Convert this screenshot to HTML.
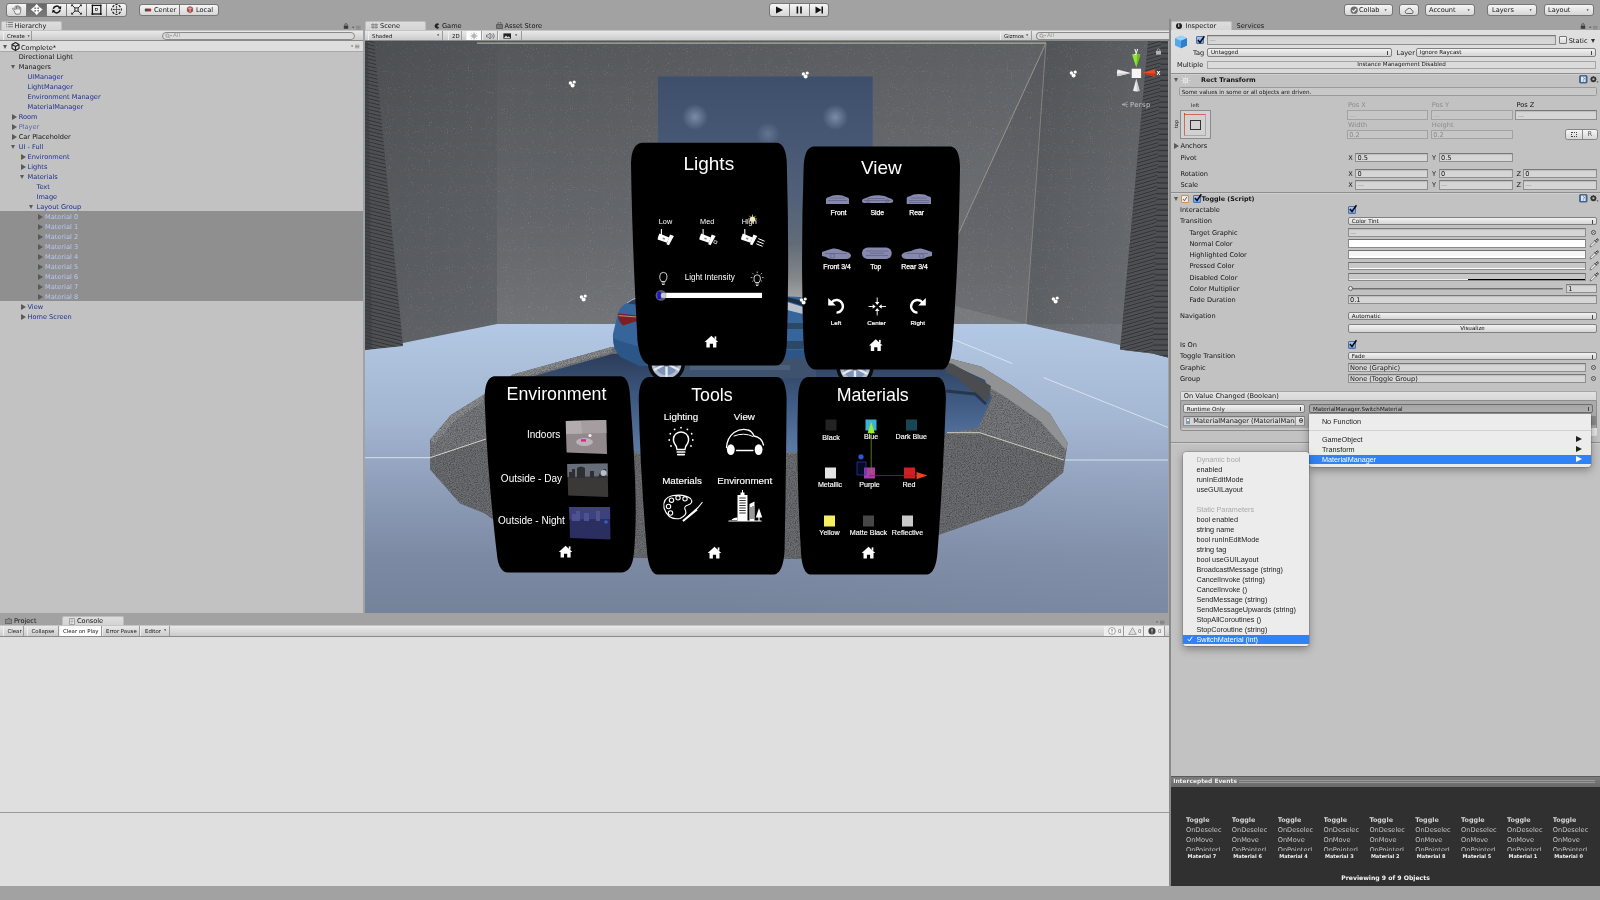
<!DOCTYPE html>
<html lang="en">
<head>
<meta charset="utf-8">
<title>Unity - Complete</title>
<style>
*{box-sizing:border-box;margin:0;padding:0}
html,body{width:1600px;height:900px;overflow:hidden}
body{position:relative;background:#a2a2a2;will-change:transform;font:6.6px/10px "DejaVu Sans","Liberation Sans",sans-serif;color:#141414;-webkit-font-smoothing:antialiased}
.a{position:absolute}
.t{position:absolute;white-space:nowrap;line-height:10px}
.m{font-size:5.6px}
.tb .m{font-size:5.4px}
.b{font-weight:bold;font-size:6.4px}
.panel{position:absolute;background:#c2c2c2}
.tab{position:absolute;height:10.4px;top:20.6px;background:linear-gradient(#dddddd,#d3d3d3);border:1px solid #bdbdbd;border-bottom:none;border-radius:2px 2px 0 0}
.tbar{position:absolute;height:11px;background:linear-gradient(#e9e9e9,#cbcbcb);border-bottom:1px solid #8a8a8a;border-top:1px solid #c4c4c4}
.btn{position:absolute;background:linear-gradient(#f6f6f6,#d6d6d6);border:1px solid #767676;border-radius:3px}
.btn.on{background:linear-gradient(#7e7e7e,#8e8e8e)}
.seg{position:absolute;top:0;bottom:0;border-right:1px solid #7a7a7a}
.fld{position:absolute;height:9px;background:#d6d6d6;border:1px solid #8f8f8f;border-top-color:#787878;box-shadow:inset 0 1px 1px rgba(0,0,0,.12)}
.fld.dis{background:#c6c6c6;border-color:#a2a2a2;box-shadow:none}
.dd{position:absolute;height:9px;background:linear-gradient(#f2f2f2,#d4d4d4);border:1px solid #808080;border-radius:2px}
.dd:after{content:"";position:absolute;right:3px;top:2px;width:1px;height:4px;background:#444}
.ck{position:absolute;width:8px;height:8px;background:linear-gradient(#f6f6f6,#d8d8d8);border:1px solid #777;border-radius:1px}
.tb{position:absolute;top:0;bottom:0;border-right:1px solid #9a9a9a;border-left:1px solid #efefef}
.h{color:#1e2e92}
.s{color:#b9c6f5}
.ar{position:absolute;width:0;height:0;border-left:5.4px solid #5a5a5a;border-top:3px solid transparent;border-bottom:3px solid transparent}
.ad{position:absolute;width:0;height:0;border-top:4.5px solid #5a5a5a;border-left:2.8px solid transparent;border-right:2.8px solid transparent}
.menu{position:absolute;background:#ececec;border-radius:3px;box-shadow:0 3px 8px rgba(0,0,0,.35),0 0 0 .5px rgba(0,0,0,.25);font:6.6px/10px "Liberation Sans",sans-serif;color:#222}
.menu .t{font:7.25px/10px "Liberation Sans",sans-serif}
.hl{position:absolute;background:#2f83f6}
</style>
</head>
<body>

<!-- ============ TOP TOOLBAR ============ -->
<div id="topbar" class="a" style="left:0;top:0;width:1600px;height:19px;background:#a2a2a2"></div>
<div class="btn" style="left:6px;top:3px;width:121px;height:14px">
  <div class="seg" style="left:0;width:20px"></div>
  <div class="seg" style="left:20px;width:20px;background:linear-gradient(#686868,#787878)"></div>
  <div class="seg" style="left:40px;width:20px"></div>
  <div class="seg" style="left:60px;width:20px"></div>
  <div class="seg" style="left:80px;width:20px"></div>
  <svg class="a" style="left:0;top:0" width="120" height="12" viewBox="0 0 120 12">
    <path transform="translate(.9 .4)" d="M6.2 6.5 L5 5 Q4.3 4.2 5 3.8 Q5.8 3.6 6.6 4.6 L7.2 5.3 V2.6 Q7.2 1.8 7.9 1.8 Q8.6 1.8 8.6 2.6 V1.9 Q8.6 1.2 9.3 1.2 Q10 1.2 10 1.9 V2.3 Q10 1.6 10.7 1.6 Q11.4 1.6 11.4 2.4 V3.2 Q11.4 2.6 12.1 2.6 Q12.8 2.6 12.8 3.4 V6.5 Q12.8 8.5 11.6 9.8 H7.8 Q6.8 8 6.2 6.5 Z M8.6 2.6V5 M10 2.3V5 M11.4 3.2V5.2" fill="#f0f0f0" stroke="#606060" stroke-width=".8" stroke-linejoin="round"/>
    <g fill="#fff"><path d="M29.7 -.2 L32.6 3.4 H26.8 Z M29.7 11.2 L32.6 7.6 H26.8 Z M23.8 5.5 L27.4 2.6 V8.4 Z M35.6 5.5 L32 2.6 V8.4 Z"/><rect x="29.1" y="2" width="1.2" height="7"/><rect x="26" y="4.9" width="7.4" height="1.2"/></g>
    <g fill="none" stroke="#111" stroke-width="1.5"><path d="M46.3 4.9 A3.5 3.5 0 0 1 52.6 3.6"/><path d="M53.1 6 A3.5 3.5 0 0 1 46.8 7.4"/></g>
    <path d="M54.3 2 L53.9 5.6 L50.8 4.1 Z M45.1 9 L45.5 5.4 L48.6 6.9 Z" fill="#111"/>
    <g stroke="#111" stroke-width=".9" fill="none"><rect x="67.9" y="3.9" width="3.2" height="3.2"/><path d="M67.9 3.9 L65 1.2 M71.1 3.9 L74 1.2 M67.9 7.1 L65 9.8 M71.1 7.1 L74 9.8"/></g>
    <path d="M64.2 .5 h2.3 l-2.3 2.3z M74.8 .5 h-2.3 l2.3 2.3z M64.2 10.5 h2.3 l-2.3 -2.3z M74.8 10.5 h-2.3 l2.3 -2.3z" fill="#111"/>
    <g stroke="#111" fill="none"><rect x="85.4" y="1.4" width="8.4" height="8.6" stroke-width="1.25"/><rect x="88.6" y="4.6" width="2" height="2" stroke-width=".6"/></g>
    <g fill="#111"><circle cx="85.4" cy="10" r="1"/><circle cx="93.8" cy="10" r="1"/><circle cx="85.4" cy="1.4" r=".8"/><circle cx="93.8" cy="1.4" r=".8"/></g>
    <g stroke="#111" fill="none" stroke-width="1.2"><path d="M105.6 3.2 A4.9 4.9 0 0 1 107.3 1.2 M111.7 1.2 A4.9 4.9 0 0 1 113.4 3.2 M113.4 7.8 A4.9 4.9 0 0 1 111.7 9.8 M107.3 9.8 A4.9 4.9 0 0 1 105.6 7.8"/><path d="M104.7 4.4 V6.6 M114.3 4.4 V6.6 M108.4 .6 H110.6 M108.4 10.4 H110.6" stroke-width="1"/></g>
    <g stroke="#222" stroke-width=".6"><path d="M109.5 2.6 V8.4 M106.6 5.5 H112.4"/></g>
    <path d="M109.5 1.9 l-1 1.3 h2z M109.5 9.1 l-1 -1.3 h2z M105.9 5.5 l1.3 -1 v2z M113.1 5.5 l-1.3 -1 v2z" fill="#222"/>
  </svg>
</div>
<div class="btn" style="left:139px;top:4px;width:80px;height:12px">
  <div class="seg" style="left:0;width:40px"></div>
  <svg class="a" style="left:0;top:0" width="78" height="10" viewBox="0 0 78 10">
    <path d="M5 3.5 h3 v3 h-3z" fill="#555"/><path d="M8 3.5 h3 v3 h-3z" fill="#c33"/><path d="M4.5 5 h7" stroke="#333" stroke-width=".6"/>
    <path d="M50 1.5 l2.6 1.2 v3.6 l-2.6 1.7 l-2.6 -1.7 v-3.6z" fill="#b44" stroke="#533" stroke-width=".6"/><path d="M50 1.5 v6.5 M47.4 2.7 l2.6 1.4 l2.6 -1.4" stroke="#fff" stroke-width=".5" fill="none"/>
  </svg>
  <span class="t" style="left:14px;top:0">Center</span>
  <span class="t" style="left:56px;top:0">Local</span>
</div>
<div class="btn" style="left:769px;top:3px;width:60px;height:14px">
  <div class="seg" style="left:0;width:20px"></div>
  <div class="seg" style="left:20px;width:20px"></div>
  <svg class="a" style="left:0;top:0" width="58" height="12" viewBox="0 0 58 12">
    <path d="M6 2.5 L13 6 L6 9.5 Z" fill="#111"/>
    <path d="M26.6 2.5 h1.6 v7 h-1.6z M30.2 2.5 h1.6 v7 h-1.6z" fill="#111"/>
    <path d="M45.5 2.5 L51.5 6 L45.5 9.5 Z M51.5 2.5 h1.5 v7 h-1.5z" fill="#111"/>
  </svg>
</div>
<div class="btn" style="left:1344px;top:4px;width:49px;height:12px"><svg class="a" style="left:4.5px;top:.8px" width="8.4" height="8.4" viewBox="0 0 8 8"><circle cx="4" cy="4" r="3.5" fill="#6e6e6e"/><path d="M2.2 4.2 l1.3 1.3 l2.4 -2.8" stroke="#fff" stroke-width="1" fill="none"/></svg><span class="t" style="left:14px;top:0">Collab</span><span class="t" style="left:39.5px;top:.3px;font-size:2.9px;color:#555">▼</span></div>
<div class="btn" style="left:1399px;top:4px;width:20px;height:12px"><svg class="a" style="left:4px;top:1.5px" width="11" height="8" viewBox="0 0 11 8"><path d="M2.5 6.5 a1.8 1.8 0 0 1 .3 -3.5 a2.6 2.6 0 0 1 5 .3 a1.7 1.7 0 0 1 .4 3.2z" fill="none" stroke="#333" stroke-width=".7"/></svg></div>
<div class="btn" style="left:1425px;top:4px;width:50px;height:12px"><span class="t" style="left:3px;top:0">Account</span><span class="t" style="left:41.5px;top:.3px;font-size:2.9px;color:#555">▼</span></div>
<div class="btn" style="left:1487px;top:4px;width:50px;height:12px"><span class="t" style="left:4px;top:0">Layers</span><span class="t" style="left:41.5px;top:.3px;font-size:2.9px;color:#555">▼</span></div>
<div class="btn" style="left:1544px;top:4px;width:50px;height:12px"><span class="t" style="left:3px;top:0">Layout</span><span class="t" style="left:41.5px;top:.3px;font-size:2.9px;color:#555">▼</span></div>

<!-- ============ HIERARCHY ============ -->
<div class="tab" style="left:1px;width:61px"><svg class="a" style="left:3.5px;top:.8px" width="7" height="5.2" viewBox="0 0 8 6"><path d="M0 .5h1M2 .5h6M0 3h1M2 3h6M0 5.5h1M2 5.5h6" stroke="#555" stroke-width=".8"/></svg><span class="t" style="left:12.5px;top:-1px">Hierarchy</span></div>
<svg class="a" style="left:343px;top:23px" width="18" height="7" viewBox="0 0 18 7"><rect x=".8" y="2.6" width="4.4" height="3.2" fill="#3c3c3c"/><path d="M1.8 2.6v-.8a1.2 1.2 0 0 1 2.4 0v.8" fill="none" stroke="#3c3c3c" stroke-width=".7"/><path d="M9 3.8h2.4l-1.2 1.4z" fill="#444"/><path d="M13 3.4h4.6M13 4.7h4.6M13 6h4.6" stroke="#808080" stroke-width=".8"/></svg>
<div class="panel" id="hier" style="left:0;top:30px;width:363px;height:583px">
  <div class="tbar" style="left:0;top:0;width:363px">
    <div class="tb" style="left:3px;width:29px"><span class="t" style="left:3px;top:0;font-size:5.4px">Create</span><span class="t" style="left:23.5px;top:-.5px;font-size:2.9px;color:#555">▼</span></div>
    <div class="a" style="left:162px;top:1px;width:193px;height:8px;border:1px solid #8a8a8a;border-radius:4px;background:#dcdcdc"></div>
    <svg class="a" style="left:165px;top:2px" width="8" height="6" viewBox="0 0 8 6"><circle cx="2.4" cy="2.6" r="1.6" fill="none" stroke="#777" stroke-width=".6"/><path d="M3.5 3.8 l1.3 1.5" stroke="#777" stroke-width=".6"/><path d="M5 2.3 h2 l-1 1.2z" fill="#777"/></svg>
    <span class="t m" style="left:173px;top:-1px;color:#9a9a9a">All</span>
  </div>
  <div class="a" style="left:0;top:11px;width:363px;height:11px;background:#dedede;border-bottom:1px solid #a8a8a8"></div>
  <div class="a" style="left:0;top:181px;width:363px;height:90px;background:#8f8f8f"></div>
  <svg class="a" style="left:350px;top:14px" width="11" height="5" viewBox="0 0 11 5"><path d="M1 1.6h2.2l-1.1 1.3z" fill="#555"/><path d="M5 1.2h4.4M5 2.5h4.4M5 3.8h4.4" stroke="#8a8a8a" stroke-width=".8"/></svg>
  <svg class="a" style="left:11px;top:12px" width="9" height="9" viewBox="0 0 18 18"><path d="M9 1 L16 5 V13 L9 17 L2 13 V5 Z M9 9 V17 M9 9 L2 5 M9 9 L16 5" fill="none" stroke="#222" stroke-width="2.2" stroke-linejoin="round"/></svg>
  <i class="ad" style="left:3.2px;top:15.1px"></i>
<span class="t " style="left:21px;top:12.5px">Complete*</span>
<span class="t " style="left:18.7px;top:22.0px">Directional Light</span>
<i class="ad" style="left:11.4px;top:34.6px"></i>
<span class="t " style="left:18.7px;top:32.0px">Managers</span>
<span class="t h" style="left:27.5px;top:42.0px">UIManager</span>
<span class="t h" style="left:27.5px;top:52.0px">LightManager</span>
<span class="t h" style="left:27.5px;top:62.0px">Environment Manager</span>
<span class="t h" style="left:27.5px;top:72.0px">MaterialManager</span>
<i class="ar" style="left:11.8px;top:84.0px"></i>
<span class="t h" style="left:18.7px;top:82.0px">Room</span>
<i class="ar" style="left:11.8px;top:94.0px"></i>
<span class="t h" style="left:18.7px;top:92.0px;opacity:.62">Player</span>
<i class="ar" style="left:11.8px;top:104.0px"></i>
<span class="t " style="left:18.7px;top:102.0px">Car Placeholder</span>
<i class="ad" style="left:11.4px;top:114.6px"></i>
<span class="t h" style="left:18.7px;top:112.0px">UI - Full</span>
<i class="ar" style="left:20.6px;top:124.0px"></i>
<span class="t h" style="left:27.5px;top:122.0px">Environment</span>
<i class="ar" style="left:20.6px;top:134.0px"></i>
<span class="t h" style="left:27.5px;top:132.0px">Lights</span>
<i class="ad" style="left:20.2px;top:144.6px"></i>
<span class="t h" style="left:27.5px;top:142.0px">Materials</span>
<span class="t h" style="left:36.5px;top:152.0px">Text</span>
<span class="t h" style="left:36.5px;top:162.0px">Image</span>
<i class="ad" style="left:29.2px;top:174.6px"></i>
<span class="t h" style="left:36.5px;top:172.0px">Layout Group</span>
<i class="ar" style="left:38.1px;top:184.0px"></i>
<span class="t s" style="left:45px;top:182.0px">Material 0</span>
<i class="ar" style="left:38.1px;top:194.0px"></i>
<span class="t s" style="left:45px;top:192.0px">Material 1</span>
<i class="ar" style="left:38.1px;top:204.0px"></i>
<span class="t s" style="left:45px;top:202.0px">Material 2</span>
<i class="ar" style="left:38.1px;top:214.0px"></i>
<span class="t s" style="left:45px;top:212.0px">Material 3</span>
<i class="ar" style="left:38.1px;top:224.0px"></i>
<span class="t s" style="left:45px;top:222.0px">Material 4</span>
<i class="ar" style="left:38.1px;top:234.0px"></i>
<span class="t s" style="left:45px;top:232.0px">Material 5</span>
<i class="ar" style="left:38.1px;top:244.0px"></i>
<span class="t s" style="left:45px;top:242.0px">Material 6</span>
<i class="ar" style="left:38.1px;top:254.0px"></i>
<span class="t s" style="left:45px;top:252.0px">Material 7</span>
<i class="ar" style="left:38.1px;top:264.0px"></i>
<span class="t s" style="left:45px;top:262.0px">Material 8</span>
<i class="ar" style="left:20.6px;top:274.0px"></i>
<span class="t h" style="left:27.5px;top:272.0px">View</span>
<i class="ar" style="left:20.6px;top:284.0px"></i>
<span class="t h" style="left:27.5px;top:282.0px">Home Screen</span>
</div>


<!-- ============ SCENE ============ -->
<div class="tab" style="left:365px;width:61px"><svg class="a" style="left:5px;top:1.4px" width="7" height="6" viewBox="0 0 7 6"><path d="M0 1.5h7M0 3h7M0 4.5h7M2 0v6M5 0v6" stroke="#666" stroke-width=".55"/></svg><span class="t" style="left:14px;top:-1px">Scene</span></div>
<svg class="a" style="left:434px;top:23px" width="6" height="6" viewBox="0 0 6 6"><path d="M5.2 1.2 A2.6 2.6 0 1 0 5.2 4.8 L3 3 Z" fill="#222"/></svg>
<span class="t" style="left:442px;top:21px">Game</span>
<svg class="a" style="left:496px;top:22px" width="7" height="7" viewBox="0 0 7 7"><path d="M.5 2.5h6v4h-6z" fill="#777" stroke="#444" stroke-width=".6"/><path d="M2 2.5v-1.2a1.5 1.5 0 0 1 3 0v1.2" fill="none" stroke="#444" stroke-width=".7"/></svg>
<span class="t" style="left:504.5px;top:21px">Asset Store</span>
<div class="tbar" style="left:365px;top:30px;width:804px">
  <div class="tb" style="left:3px;width:75px"><span class="t m" style="left:3px;top:0">Shaded</span><span class="t" style="left:68px;top:-1.5px;font-size:2.9px;color:#555">▼</span></div>
  <div class="tb" style="left:83px;width:14px"><span class="t m" style="left:3px;top:0">2D</span></div>
  <div class="tb" style="left:101px;width:16px;background:#fbfbfb"><svg class="a" style="left:3px;top:1px" width="8" height="8" viewBox="0 0 8 8"><circle cx="4" cy="4" r="1.3" fill="none" stroke="#444" stroke-width=".6"/><path d="M4 .5v1.4M4 6.1v1.4M.5 4h1.4M6.1 4h1.4M1.5 1.5l1 1M5.5 5.5l1 1M6.5 1.5l-1 1M2.5 5.5l-1 1" stroke="#444" stroke-width=".5"/></svg></div>
  <div class="tb" style="left:117px;width:16px"><svg class="a" style="left:3px;top:1px" width="10" height="8" viewBox="0 0 10 8"><path d="M.5 3h1.7l2-2v6l-2-2H.5z" fill="none" stroke="#444" stroke-width=".6"/><path d="M5.5 2.2a2.4 2.4 0 0 1 0 3.6M7 1.2a4 4 0 0 1 0 5.6" fill="none" stroke="#444" stroke-width=".6"/></svg></div>
  <div class="tb" style="left:133px;width:24px"><svg class="a" style="left:4px;top:2px" width="9" height="6" viewBox="0 0 9 6"><rect x=".4" y=".4" width="7.6" height="5.2" fill="#222"/><path d="M1 5l2-2.4 1.6 1.6 1-.9L7.4 5z" fill="#ddd"/></svg><span class="t" style="left:16px;top:-1.5px;font-size:2.9px;color:#555">▼</span></div>
  <div class="tb" style="left:635px;width:32px"><span class="t m" style="left:3px;top:0">Gizmos</span><span class="t" style="left:25px;top:-1.5px;font-size:2.9px;color:#555">▼</span></div>
  <div class="a" style="left:671px;top:1px;width:133px;height:8px;border:1px solid #8a8a8a;border-radius:4px 0 0 4px;border-right:none;background:#dcdcdc"></div>
  <svg class="a" style="left:674px;top:2px" width="8" height="6" viewBox="0 0 8 6"><circle cx="2.4" cy="2.6" r="1.6" fill="none" stroke="#777" stroke-width=".6"/><path d="M3.5 3.8 l1.3 1.5" stroke="#777" stroke-width=".6"/><path d="M5 2.3 h2 l-1 1.2z" fill="#777"/></svg>
  <span class="t m" style="left:682px;top:-1px;color:#9a9a9a">All</span>
</div>
<svg class="a" style="left:365px;top:41px" width="803" height="572" viewBox="365 41 803 572" font-family="Liberation Sans,sans-serif">
<defs>
  <linearGradient id="gfloor" x1="0" y1="324" x2="0" y2="613" gradientUnits="userSpaceOnUse"><stop offset="0" stop-color="#b3c8e4"/><stop offset=".33" stop-color="#a2b5d1"/><stop offset=".61" stop-color="#8b9ab5"/><stop offset=".8" stop-color="#7d8aa4"/><stop offset="1" stop-color="#74829a"/></linearGradient>
  <linearGradient id="gfloorx" x1="700" y1="0" x2="1168" y2="0" gradientUnits="userSpaceOnUse"><stop offset="0" stop-color="#b8cbe6" stop-opacity="0"/><stop offset="1" stop-color="#b8cbe6" stop-opacity=".1"/></linearGradient>
  <linearGradient id="gwalll" x1="365" y1="0" x2="497" y2="0" gradientUnits="userSpaceOnUse"><stop offset="0" stop-color="#56595d"/><stop offset="1" stop-color="#5d6064"/></linearGradient>
  <linearGradient id="gwall" x1="497" y1="0" x2="1026" y2="0" gradientUnits="userSpaceOnUse"><stop offset="0" stop-color="#606367"/><stop offset=".12" stop-color="#606367"/><stop offset=".6" stop-color="#66696d"/><stop offset="1" stop-color="#6a6d71"/></linearGradient>
  <linearGradient id="gwallv" x1="0" y1="41" x2="0" y2="361" gradientUnits="userSpaceOnUse"><stop offset="0" stop-color="#000" stop-opacity=".12"/><stop offset=".5" stop-color="#000" stop-opacity=".02"/><stop offset="1" stop-color="#fff" stop-opacity=".04"/></linearGradient>
  <linearGradient id="gblue" x1="0" y1="76" x2="0" y2="300" gradientUnits="userSpaceOnUse"><stop offset="0" stop-color="#3e4f6c"/><stop offset=".3" stop-color="#475874"/><stop offset=".55" stop-color="#52617a"/><stop offset=".75" stop-color="#626c78"/><stop offset=".9" stop-color="#83878a"/><stop offset="1" stop-color="#a6a7a6"/></linearGradient>
  <radialGradient id="gglow"><stop offset="0" stop-color="#9db0cc" stop-opacity=".6"/><stop offset="1" stop-color="#9db0cc" stop-opacity="0"/></radialGradient>
  <linearGradient id="gwallb" x1="0" y1="41" x2="0" y2="324" gradientUnits="userSpaceOnUse"><stop offset="0" stop-color="#fff" stop-opacity="0"/><stop offset=".6" stop-color="#fff" stop-opacity=".02"/><stop offset="1" stop-color="#fff" stop-opacity=".09"/></linearGradient>
  <linearGradient id="gwallr" x1="1030" y1="0" x2="1150" y2="0" gradientUnits="userSpaceOnUse"><stop offset="0" stop-color="#5a5d61"/><stop offset="1" stop-color="#686b6f"/></linearGradient>
  <pattern id="pstripe" width="8" height="3.6" patternUnits="userSpaceOnUse" patternTransform="skewY(14)"><rect width="8" height="3.6" fill="#4e5054"/><rect y="2.7" width="8" height=".9" fill="#303235"/></pattern>
  <pattern id="pstripe3" width="8" height="5.4" patternUnits="userSpaceOnUse"><rect width="8" height="5.4" fill="#4d4f53"/><rect y="4.2" width="8" height="1.2" fill="#2f3134"/></pattern>
  <pattern id="pstripe2" width="8" height="3.6" patternUnits="userSpaceOnUse" patternTransform="skewY(-16)"><rect width="8" height="3.6" fill="#4e5054"/><rect y="2.7" width="8" height=".9" fill="#303235"/></pattern>
  <linearGradient id="gdisc" x1="0" y1="350" x2="0" y2="452" gradientUnits="userSpaceOnUse"><stop offset="0" stop-color="#2a3a56"/><stop offset=".5" stop-color="#3f5a82"/><stop offset="1" stop-color="#5b7ba7"/></linearGradient>
  <filter id="noise" x="0" y="0" width="100%" height="100%" color-interpolation-filters="sRGB"><feTurbulence type="fractalNoise" baseFrequency="0.85" numOctaves="2" seed="7" result="n"/><feColorMatrix in="n" type="matrix" values="0 0 0 0 0  0 0 0 0 0  0 0 0 0 0  1.6 1.6 1.6 0 -2.1"/><feComposite operator="in" in2="SourceGraphic"/></filter>
  <filter id="noise2" x="0" y="0" width="100%" height="100%" color-interpolation-filters="sRGB"><feTurbulence type="fractalNoise" baseFrequency="0.95" numOctaves="1" seed="11" result="n"/><feColorMatrix in="n" type="matrix" values="0 0 0 0 1  0 0 0 0 1  0 0 0 0 1  2.2 2.2 2.2 0 -3.72"/><feComposite operator="in" in2="SourceGraphic"/></filter>
  <g id="lg" fill="#fff"><circle cx="-1.6" cy="-1" r="1.7"/><circle cx="2.2" cy="-2" r="1.6"/><circle cx="0.6" cy="1.6" r="2"/></g>
  <g id="home" fill="#fff"><path d="M0 -6.2 L6.8 0 H5 V5.6 H1.6 V1.8 H-1.6 V5.6 H-5 V0 H-6.8 Z"/><rect x="3.2" y="-5.6" width="1.7" height="3.2"/></g>
</defs>
<!-- walls -->
<rect x="365" y="41" width="803" height="320" fill="url(#gwalll)"/>
<polygon points="497,41 1046,41 1026,324 497,324" fill="url(#gwall)"/>
<polygon points="497,41 1046,41 1026,324 497,324" fill="url(#gwallb)"/>
<polygon points="1046,41 1168,41 1168,360 1026,324" fill="url(#gwallr)"/>
<polygon points="1046,43 957,237 930,300 1026,324" fill="#4e5155" opacity=".3"/>
<rect x="365" y="41" width="803" height="320" fill="url(#gwallv)"/>
<rect x="365" y="41" width="803" height="320" fill="#fff" opacity=".15" filter="url(#noise2)"/>
<!-- floor -->
<polygon points="365,350 403,343 497,324 1026,324 1120,345 1120,349.6 1152.6,353.6 1168,357.4 1168,613 365,613" fill="url(#gfloor)"/>
<rect x="365" y="324" width="803" height="289" fill="url(#gfloorx)"/>
<!-- floor lines -->
<path d="M365 457.7 H430" stroke="#dfe6f0" stroke-width=".9"/>
<path d="M1063.8 460 H1168" stroke="#dfe6f0" stroke-width=".9"/>
<path d="M951.8 338.7 L1012.5 363.6 M1043.6 377.6 L1168 427.4" stroke="#e6edf7" stroke-width=".9" opacity=".85"/>
<!-- pillars -->
<polygon points="365,41 374,41 403,346 365,350" fill="url(#pstripe)"/>
<polygon points="365,41 368,41 372,349 365,350" fill="#3b3d40" opacity=".6"/>
<polygon points="1148,41 1168,41 1168,357.4 1152.6,353.6 1120,349.6" fill="url(#pstripe2)"/>
<polygon points="1161,41 1168,41 1168,357.4 1152.6,353.6" fill="url(#pstripe3)"/>
<!-- wall lines -->
<path d="M477 43.2 H1046" stroke="#aeab9c" stroke-width="1.2"/>
<path d="M1046 43 L940 274" stroke="#96958b" stroke-width="1"/>
<path d="M1046 43 L1026 324" stroke="#8f8e86" stroke-width=".8"/>
<!-- blue back panel -->
<rect x="658" y="76.5" width="214.7" height="250" fill="url(#gblue)"/>
<circle cx="695" cy="117" r="13" fill="url(#gglow)"/><circle cx="835.3" cy="117.3" r="13" fill="url(#gglow)"/><circle cx="768" cy="134" r="12" fill="url(#gglow)" opacity=".55"/>
<!-- platform -->
<polygon points="430,440 451,415 485,394 513,374.6 612,347 780,338 945.6,357.4 981.4,366.7 1014,387 1049.8,413.4 1067.6,443 1063.2,472.5 1023.4,505.2 939.3,534.8 800,559 640,558 540,555 485,513.4 460,503.6 430,469.5" fill="#6c6e71"/>
<polygon points="430,440 451,415 485,394 513,374.6 612,347 780,338 945.6,357.4 981.4,366.7 1014,387 1049.8,413.4 1067.6,443 1063.8,460 979.8,432.7 947,432.7 800,454 640,454 486,439 430,457.7" fill="#787a7d"/>
<polygon points="430,440 451,415 485,394 513,374.6 612,347 612,352 516,379.5 489,398.5 456,419.5 434.5,444" fill="#8b8d90"/>
<polygon points="430,440 451,415 485,394 513,374.6 612,347 780,338 945.6,357.4 981.4,366.7 1014,387 1049.8,413.4 1067.6,443 1063.2,472.5 1023.4,505.2 939.3,534.8 800,559 640,558 540,555 485,513.4 460,503.6 430,469.5" fill="#000" opacity=".3" filter="url(#noise)"/>
<polygon points="945.6,357.4 981.4,366.7 1014,387 1049.8,413.4 1067.6,443 1066,450 1040,421 1004,396 974,379 946,370" fill="#909294"/>
<polygon points="500,396 520,380 612,354 780,346 946,362 985,380 992,398 978,428 946,433 800,452 640,452 520,436" fill="url(#gdisc)"/>
<polygon points="946,362 953,364 991,386 988,402 976,394 953,375 946,373" fill="#4a4c50"/>
<path d="M946 391 L975 394 L986 404" fill="none" stroke="#27364f" stroke-width="3"/>
<path d="M430 457.7 L486 439" stroke="#d2d2cc" stroke-width="1"/>
<path d="M947 432.7 H979.8 L1063.8 460" stroke="#cfcdc0" stroke-width="1" fill="none"/>
<!-- car -->
<path d="M627 303 Q619 307 617.5 315 L613 334 Q612 350 621 357 L640 366 H812 V300 L800 297 L660 290 Z" fill="#36659b"/>
<path d="M613.5 338 Q630 346 660 350 H812 V366 H640 L621 357 Q613 350 613.5 338Z" fill="#2c5687"/>
<path d="M618 313.5 L637 315.5 V321 L623 325.5 Q617.5 321 618 313.5Z" fill="#7f1d25"/><path d="M618.5 315.6 L637 317" stroke="#c99a86" stroke-width=".9"/>
<path d="M627 303 Q633 298 640 297" fill="none" stroke="#aeb9c6" stroke-width=".9"/><path d="M627.5 303.5 Q633 299.5 640 298.5 V305 Z" fill="#27415f"/>
<path d="M787 297 L803 301 V306 L787 301Z" fill="#1e2c44"/><path d="M787 302 L803 307 V314 L787 310Z" fill="#b9c2cc"/>
<path d="M787 323 H803 V329 H787Z M787 341 H803 V349 H787Z" fill="#2b4866"/>
<rect x="652" y="358" width="164" height="20" fill="#3f526d"/>
<rect x="690" y="365" width="100" height="5" fill="#4c6079"/>
<circle cx="666.5" cy="363.5" r="18.6" fill="#0a0a0b"/><circle cx="666.5" cy="363.5" r="15" fill="#aebbd0"/><circle cx="666.5" cy="363.5" r="11.5" fill="#7e93b6"/><path d="M666.5 350 V377 M654 357 L679 370 M654 370 L679 357" stroke="#e4e9f0" stroke-width="2.4"/><circle cx="666.5" cy="363.5" r="3" fill="#55617a"/>
<circle cx="855" cy="367.5" r="18.6" fill="#0a0a0b"/><circle cx="855" cy="367.5" r="15" fill="#aebbd0"/><circle cx="855" cy="367.5" r="11.5" fill="#7e93b6"/><path d="M855 354 V381 M842.5 361 L867.5 374 M842.5 374 L867.5 361" stroke="#e4e9f0" stroke-width="2.4"/><circle cx="855" cy="367.5" r="3" fill="#55617a"/>
<!-- UI panels -->
<g fill="#000">
<path d="M642 142.8 H777 Q786 144 786.8 163 Q789.5 260 786.8 346 Q785 364 777 365.6 H651 Q640 364 637.5 341 Q632 240 631 163 Q631.5 144 642 142.8Z"/>
<path d="M813 146.6 H951 Q960 148 960 169 Q959 250 952.8 341 Q951 367 943 369.4 H814 Q805 367 803.6 346 Q800.5 260 803.6 169 Q804 148 813 146.6Z"/>
<path d="M494 376.2 H621 Q629 377 630 396 Q636.5 480 635.6 522 Q635 545 633.4 557 Q631.5 571 622 572.6 H507 Q498.5 571 497 555 Q487 470 484.6 399 Q484.5 378 494 376.2Z"/>
<path d="M649 377 H777 Q786 378 786.6 399 Q786 480 784.5 552 Q783 573 774 574.6 H657 Q649 573 647 552 Q640 470 638.7 399 Q639 378 649 377Z"/>
<path d="M808 377 H937 Q946 378 945.9 399 Q943 480 937.5 552 Q936 573 927 574.6 H810 Q802 573 801 552 Q796 470 798 399 Q798.5 378 808 377Z"/>
</g>
<g fill="#fff" text-anchor="middle">
<!-- Lights -->
<text x="708.8" y="169.7" font-size="19">Lights</text>
<g font-size="7.3"><text x="665.5" y="223.6">Low</text><text x="707.2" y="223.6">Med</text><text x="749.2" y="223.6">High</text>
</g><text x="709.7" y="280" font-size="8.15">Light Intensity</text>
<circle cx="752.5" cy="219" r="2.6" fill="#f3e6b8"/><path d="M752.5 214.5v9M748 219h9M749.3 215.8l6.4 6.4M755.7 215.8l-6.4 6.4" stroke="#f3e6b8" stroke-width=".7"/>
<g id="lamp1"><path d="M-7.6 -0.8 L-6.2 -4.4 L3.6 -0.6 L1.4 4.8 L-8 1.6 Z"/><path d="M4.4 -3.6 L8.3 -2 L3.3 7.2 L0.9 6.2 Z"/><path d="M-4.2 -9 V-3" stroke="#fff" stroke-width="1.1"/><path d="M-2.6 -0.6 l2.2 .9 l-.6 1.5 l-2.2 -.9z" fill="#888"/></g>
<use href="#lamp1" x="665.6" y="238"/>
<use href="#lamp1" x="707.3" y="238"/><path d="M714.6 240.4l2.6 1.1-1 2.4-2.6-1.1z" fill="none" stroke="#fff" stroke-width=".7"/>
<use href="#lamp1" x="749" y="238"/><path d="M758.3 238.6l6.3 2.6M757.3 241.2l6.3 2.6M756.3 243.8l6.3 2.6" stroke="#fff" stroke-width="1"/>
<g fill="none" stroke="#fff" stroke-width=".8"><path d="M661.3 281.5 Q659.2 278.5 659.8 276 A3.6 3.6 0 0 1 667 276 Q667.3 278.5 665.3 281.5 Z M661.6 283h3.4M662 284.5h2.6"/>
<path d="M755.3 282.5 Q753.6 280 754 278 A3.2 3.2 0 0 1 760.4 278 Q760.7 280 759 282.5 Z M755.6 284h3.2M756 285.5h2.4"/><path d="M757.2 271.5v1.6M752.6 273.2l1.1 1.1M761.8 273.2l-1.1 1.1M750.8 277.6h1.6M762 277.6h1.6M752.4 281.4l1-.7M762 281.4l-1-.7" stroke-width=".7"/></g>
<rect x="662" y="292.8" width="100" height="5.2"/>
<circle cx="661" cy="295.4" r="5.4" fill="#7a7c86" opacity=".75"/><rect x="657.5" y="291.6" width="3.2" height="7.4" fill="#1414e0"/><circle cx="663.5" cy="295.4" r="2.6" fill="#c8c8d4"/>
<use href="#home" x="711.4" y="342"/>
<!-- View -->
<text x="881.4" y="173.6" font-size="19">View</text>
<g font-size="6.9" stroke="#fff" stroke-width=".25"><text x="838.5" y="215.2">Front</text><text x="877.3" y="215.2">Side</text><text x="916.7" y="215.2">Rear</text>
<text x="837" y="269">Front 3/4</text><text x="875.8" y="269">Top</text><text x="914.5" y="269">Rear 3/4</text></g>
<g font-size="6.2" stroke="#fff" stroke-width=".2"><text x="836" y="325">Left</text><text x="876.6" y="325">Center</text><text x="917.8" y="325">Right</text></g>
<g fill="#8788ae">
<path d="M826 204 V199 Q826 197.5 829 197 Q832 195 837.5 195 Q843 195 846 197 Q849 197.5 849 199 V204 Z"/>
<path d="M862 201 Q862 198.5 866 198 Q871 195 879 195.2 Q885 195.5 889 198 Q893 199 893.3 201 Q893 203 890 203 H865 Q862 203 862 201Z"/>
<path d="M906.7 204 V198.5 Q906.7 196.5 910 196.3 Q913 194 919 194 Q925 194 928 196.3 Q931 196.5 931 198.5 V204 Z"/>
<path d="M822 252 Q828 249.5 833 248.5 Q838 248 843 251 Q850 252 851 255 Q851 258.5 847 259 H832 Q828 259 826 257 L822 256 Z"/>
<rect x="862" y="247.5" width="29.7" height="11.5" rx="5.6"/>
<path d="M932 252 Q926 249.5 921 248.5 Q916 248 911 251 Q902.5 252 901.5 255 Q901.5 258.5 906 259 H921 Q925 259 927 257 L932 256Z"/>
</g>
<g fill="none" stroke="#4d4e70" stroke-width=".7" opacity=".7"><path d="M828 200.5h19M830 198h15M864 200.5h27M868 198.5h17M909 200.5h20M911 198h16M909 202.5h20"/><circle cx="868" cy="201.2" r="1.5"/><circle cx="887" cy="201.2" r="1.5"/><circle cx="832.5" cy="256" r="2.2"/><circle cx="921.5" cy="256" r="2.2"/><path d="M825 253.5h22M866 251h22M866 255.5h22M870 253.2h14M906 253.5h22"/></g>
<g fill="none" stroke="#fff" stroke-width="2.4"><path d="M831.5 302.5 A6.3 6.3 0 1 1 836.5 312.6"/><path d="M922.5 302.5 A6.3 6.3 0 1 0 917.5 312.6"/></g>
<path d="M828.2 298 V305.6 H835.8 Z M925.8 298 V305.6 H918.2 Z"/>
<g stroke="#fff" stroke-width=".9"><path d="M877.2 297.5v6M877.2 309.5v6M868.5 306.5h6M880 306.5h6"/></g>
<path d="M877.2 305 l-2.2 -3 h4.4z M877.2 308 l-2.2 3 h4.4z M875.7 306.5 l-3 -2.2 v4.4z M878.7 306.5 l3 -2.2 v4.4z"/>
<use href="#home" x="875.8" y="345.5"/>
<!-- Environment -->
<text x="556.5" y="400" font-size="17.8">Environment</text>
<g font-size="10" text-anchor="end"><text x="560.3" y="438.2">Indoors</text><text x="562" y="482.2">Outside - Day</text><text x="564.8" y="523.8">Outside - Night</text></g>
<use href="#home" x="565.6" y="552"/>
<!-- Tools -->
<text x="711.9" y="400.6" font-size="17.8">Tools</text>
<g font-size="9.8" stroke="#fff" stroke-width=".15"><text x="681" y="420.3">Lighting</text><text x="744.4" y="420.3">View</text><text x="682" y="484.4">Materials</text><text x="744.7" y="484.4">Environment</text></g>
<use href="#home" x="714.5" y="553"/>
<!-- Materials -->
<text x="872.7" y="400.6" font-size="17.8">Materials</text>
<g font-size="7.15" stroke="#fff" stroke-width=".15"><text x="831.1" y="439.6">Black</text><text x="871.1" y="439.4">Blue</text><text x="911.2" y="439.4">Dark Blue</text>
<text x="830" y="487.4">Metallic</text><text x="869.5" y="487.4">Purple</text><text x="909" y="487.4">Red</text>
<text x="829.5" y="534.6">Yellow</text><text x="868.5" y="534.6">Matte Black</text><text x="907.5" y="534.6">Reflective</text></g>
<use href="#home" x="868.5" y="553"/>
</g>
<!-- env thumbs -->
<polygon points="565.6,421 606.2,420 607,454 566.6,452.5" fill="#91898b"/><polygon points="566,421 606.2,420 606.5,433 566.2,434" fill="#a59d9f"/><polygon points="581,421 582,433.5 566.2,434 566,421" fill="#b3abad"/><ellipse cx="584.5" cy="442" rx="8.5" ry="4" fill="#b9b3b5"/><rect x="581" y="439.2" width="5" height="2.4" fill="#e0209a"/><circle cx="590" cy="435.5" r="1.6" fill="#f4f0f0"/>
<polygon points="567.2,464 607.6,463.6 608.2,497 568.2,495.5" fill="#3b3937"/><polygon points="567.2,464 607.6,463.6 607.8,476 567.5,477" fill="#686d7a"/><path d="M569 478v-6h3v-3h3v9zM577 478v-10q4-3 8 0v10zM590 478v-7h4v7zM598 478q2-9 8-9v9z" fill="#2f2f33"/><circle cx="603.5" cy="473" r="3" fill="#cfd6e4" opacity=".85"/>
<polygon points="569.2,507 610,507 610.5,539.5 570,538" fill="#2b2e60"/><polygon points="569.2,507 610,507 610.2,519 569.5,519.5" fill="#3d427e"/><path d="M572 521v-7h4v-3h4v10zM584 521v-8h5v8zM596 521v-10h4v10z" fill="#4d5290"/><circle cx="606" cy="522" r="1.8" fill="#3a6ae0" opacity=".8"/>
<!-- tools icons -->
<g fill="none" stroke="#fff" stroke-width="1.5" stroke-linecap="round">
<path d="M677 449.5 Q676.6 446 674.5 443.5 A7.6 7.6 0 1 1 687.5 443.5 Q685.4 446 685 449.5 Z"/><path d="M677.3 452h7.4M677.8 454.6h6.4" stroke-width="1.7"/>
<path d="M681 427.6v.1M674.6 429.3v.1M687.4 429.3v.1M670.3 433.7v.1M691.7 433.7v.1M669.2 440v.1M692.8 440v.1M671 446v.1M691 446v.1" stroke-width="1.8"/>
<path d="M726.5 447.5 Q727 438 734 432.5 Q741 428 748 430 Q752 431 754 436 Q762 437.5 763.5 445" stroke-width="1.3"/><path d="M734 436 Q744 432 753 436.5" stroke-width="1"/><path d="M736.5 450.5 H753" stroke-width="1.3"/>
</g>
<ellipse cx="730.8" cy="449.6" rx="3.9" ry="5.4" fill="#fff"/><ellipse cx="758.6" cy="449.6" rx="3.9" ry="5.4" fill="#fff"/>
<g fill="none" stroke="#fff" stroke-width="1.1">
<path d="M664 508 Q662.5 498 672 495.8 Q684 493.5 690.5 498.5 Q694 503 688 505 Q683 506.5 685.5 510.5 Q687.5 515 680 518.5 Q668 520.5 664 508Z"/>
<circle cx="671.5" cy="500.2" r="2.2"/><circle cx="678" cy="497.8" r="2.2"/><circle cx="685" cy="498.8" r="2.2"/><circle cx="668.5" cy="506.5" r="2.2"/><circle cx="670.5" cy="513" r="2.2"/>
<path d="M683 521 L698 507.5 L702.5 502"/><path d="M683 521 L697 509.5" stroke-width="2"/>
</g>
<g fill="#fff"><path d="M737.5 521V495h3v-2.5h1.5V490h1v2.5h1.5V495h3v26z"/><path d="M749.5 521v-17l5-2.5v19.5z"/><path d="M731 521q1-3.5 6.5-3.5V521zM728.5 521.6h33v-1.2h-33z"/><path d="M759 508l3.2 9.5h-6.4z"/><rect x="758.4" y="517" width="1.2" height="4"/></g>
<g stroke="#000" stroke-width=".8"><path d="M739.3 498h6.4M739.3 500.5h6.4M739.3 503h6.4M739.3 505.5h6.4M739.3 508h6.4M739.3 510.5h6.4M739.3 513h6.4M751 507v12M753 506v13"/></g>
<!-- material swatches -->
<rect x="825.5" y="419.5" width="11" height="11" fill="#222324"/><rect x="865.5" y="419.5" width="11" height="11" fill="#3cb3d6"/><rect x="906" y="419.5" width="11" height="11" fill="#184652"/>
<rect x="825" y="467.5" width="11" height="11" fill="#e4e4e4"/><rect x="864" y="467.5" width="11" height="11" fill="#b23aa5"/><rect x="904" y="467.5" width="11" height="11" fill="#cf1f24"/>
<rect x="824" y="515.5" width="11" height="11" fill="#f6f163"/><rect x="863" y="515.5" width="11" height="11" fill="#474747"/><rect x="902" y="515.5" width="11" height="11" fill="#c9c9c9"/>
<!-- transform gizmo -->
<rect x="857" y="462" width="9" height="13" fill="#1b2ea8" fill-opacity=".22" stroke="#2a3fb8" stroke-width=".7"/><circle cx="861" cy="456.8" r="2.6" fill="#2f55d6"/>
<path d="M871.2 433v40" stroke="#5c9a1e" stroke-width=".8"/><path d="M871.2 421.5l-3.6 11.8h7.2z" fill="#9be83a"/>
<path d="M869 475.6h48" stroke="#9a2416" stroke-width=".8"/><path d="M927.5 475.6l-11-3.6v7.2z" fill="#f0401e"/>

<!-- light gizmos -->
<use href="#lg" x="572" y="84"/><use href="#lg" x="805" y="75"/><use href="#lg" x="1073" y="74"/><use href="#lg" x="583" y="298"/><use href="#lg" x="803" y="301"/><use href="#lg" x="1055" y="300"/>
<!-- scene gizmo -->
<g>
  <path d="M1132 54.4 Q1136.2 53 1140.3 54.4 L1136.3 67.6 Z" fill="#8ce830"/><path d="M1137.2 54 Q1139 54 1140.3 54.4 L1136.3 67.6 Z" fill="#6dbd22"/>
  <path d="M1154.8 69.2 Q1156.2 73 1154.8 76.8 L1142 73 Z" fill="#f04a22"/><path d="M1155.4 73.6 Q1155.4 75.6 1154.8 76.8 L1142 73 Z" fill="#c4341a"/>
  <path d="M1117.6 69.6 Q1116.2 73 1117.6 76.3 L1130.8 73 Z" fill="#f0f0f0"/><path d="M1117.2 73.4 Q1117 75 1117.6 76.3 L1130.8 73 Z" fill="#cfcfcf"/>
  <path d="M1133 90.8 Q1136.3 92.2 1139.6 90.8 L1136.3 78.7 Z" fill="#ececec"/><path d="M1137 91.4 Q1138.6 91.4 1139.6 90.8 L1136.3 78.7 Z" fill="#cacaca"/>
  <rect x="1131.7" y="68.7" width="9.4" height="9.3" fill="#f5f5f5"/>
  <text x="1136.3" y="52.6" font-size="7" fill="#fff" text-anchor="middle" font-weight="bold">y</text>
  <text x="1158.4" y="75" font-size="7" fill="#fff" text-anchor="middle" font-weight="bold">x</text>
  <path d="M1122 104.5 l5.6 -2.3 M1122 104.5 l5.6 2.3 M1122 104.5 h5.6" stroke="#c4c4c4" stroke-width=".55"/>
  <text x="1130" y="107" font-size="6.9" fill="#c6c6c6" font-family="DejaVu Sans,sans-serif" letter-spacing=".35">Persp</text>
  <rect x="1156" y="51" width="5" height="3.6" fill="#b4b4b4"/><path d="M1157.2 51 v-.9 a1.3 1.3 0 0 1 2.6 0 v.9" fill="none" stroke="#b4b4b4" stroke-width=".7"/>
</g>
</svg>


<!-- ============ PROJECT / CONSOLE ============ -->
<svg class="a" style="left:5px;top:618px" width="7" height="6" viewBox="0 0 7 6"><path d="M.4 1.4h2l.6-.9h1.6l.4.9h1.6v4.2H.4z" fill="#8a8a8a" stroke="#444" stroke-width=".6"/></svg>
<span class="t" style="left:14px;top:616px">Project</span>
<div class="tab" style="left:62px;top:615.6px;width:62px"><svg class="a" style="left:6px;top:1px" width="6" height="7" viewBox="0 0 6 7"><rect x=".4" y=".4" width="5.2" height="6.2" rx=".8" fill="#e8e8e8" stroke="#666" stroke-width=".6"/><path d="M1.6 2h2.8M1.6 3.5h2.8M1.6 5h1.8" stroke="#777" stroke-width=".5"/></svg><span class="t" style="left:14px;top:-1px">Console</span></div>
<svg class="a" style="left:1155px;top:620px" width="11" height="5" viewBox="0 0 11 5"><path d="M1 1.6h2.2l-1.1 1.3z" fill="#555"/><path d="M5 1.2h4.4M5 2.5h4.4M5 3.8h4.4" stroke="#777" stroke-width=".8"/></svg>
<div class="panel" style="left:0;top:625px;width:1169px;height:261px;background:#dfdfdf">
  <div class="tbar" style="left:0;top:0;width:1169px;height:12px">
    <div class="tb" style="left:3px;width:21px"><span class="t m" style="left:3.5px;top:0">Clear</span></div>
    <div class="tb" style="left:27px;width:32px"><span class="t m" style="left:3.5px;top:0">Collapse</span></div>
    <div class="tb" style="left:59px;width:43px;background:#fdfdfd"><span class="t m" style="left:3px;top:0">Clear on Play</span></div>
    <div class="tb" style="left:102px;width:38px"><span class="t m" style="left:3px;top:0">Error Pause</span></div>
    <div class="tb" style="left:140px;width:30px"><span class="t m" style="left:4px;top:0">Editor</span><span class="t" style="left:23px;top:-1px;font-size:2.9px;color:#555">▼</span></div>
    <div class="tb" style="left:1104px;width:20px;background:#ededed"><svg class="a" style="left:3px;top:1px" width="8" height="8" viewBox="0 0 8 8"><circle cx="4" cy="4" r="3.4" fill="#fff" stroke="#666" stroke-width=".6"/><path d="M4 2v2.6M4 5.6v.6" stroke="#555" stroke-width=".8"/></svg><span class="t m" style="left:13px;top:0;color:#666">0</span></div>
    <div class="tb" style="left:1124px;width:20px;background:#ededed"><svg class="a" style="left:3px;top:1px" width="9" height="8" viewBox="0 0 9 8"><path d="M4.5.8L8.3 7.4H.7z" fill="#e0e0e0" stroke="#777" stroke-width=".6"/></svg><span class="t m" style="left:13px;top:0;color:#666">0</span></div>
    <div class="tb" style="left:1144px;width:21px;background:#ededed"><svg class="a" style="left:3px;top:1px" width="8" height="8" viewBox="0 0 8 8"><circle cx="4" cy="4" r="3.6" fill="#444"/><path d="M4 1.8v2.8M4 5.6v.7" stroke="#fff" stroke-width=".9"/></svg><span class="t m" style="left:13px;top:0;color:#666">0</span></div>
  </div>
  <div class="a" style="left:0;top:186.5px;width:1169px;height:1px;background:#9a9a9a"></div>
</div>
<div class="a" style="left:0;top:886px;width:1600px;height:14px;background:#a2a2a2"></div>


<!-- ============ INSPECTOR ============ -->
<div class="a" style="left:1169px;top:19px;width:2px;height:867px;background:#8a8a8a"></div>
<div class="tab" style="left:1171px;width:61px"><div class="a" style="left:4px;top:1px;width:6px;height:6px;border-radius:50%;background:#1c1c1c"></div><span class="t b" style="left:6.1px;top:-1px;color:#fff;font-size:4.6px">i</span><span class="t" style="left:13.5px;top:-1px">Inspector</span></div>
<span class="t " style="left:1236.5px;top:20.8px;">Services</span>
<svg class="a" style="left:1579.5px;top:23px" width="18" height="7" viewBox="0 0 18 7"><rect x=".8" y="2.6" width="4.4" height="3.2" fill="#3c3c3c"/><path d="M1.8 2.6v-.8a1.2 1.2 0 0 1 2.4 0v.8" fill="none" stroke="#3c3c3c" stroke-width=".7"/><path d="M9 3.8h2.4l-1.2 1.4z" fill="#444"/><path d="M13 3.4h4.6M13 4.7h4.6M13 6h4.6" stroke="#808080" stroke-width=".8"/></svg>
<div class="panel" style="left:1171px;top:30px;width:429px;height:856px"></div>
<div class="a" style="left:1171px;top:30px;width:429px;height:43.2px;background:linear-gradient(#e0e0e0,#d9d9d9)"></div>
<svg class="a" style="left:1174px;top:34.5px" width="14" height="14" viewBox="0 0 14 14"><path d="M7 .8l6 2.4v7.2l-6 2.8-6-2.8V3.2z" fill="#55a8e8"/><path d="M7 .8l6 2.4-6 2.6-6-2.6z" fill="#9bd2f8"/><path d="M7 5.8v7.4l6-2.8V3.2z" fill="#2f7fc8"/></svg>
<div class="ck" style="left:1195.7px;top:36.0px;background:linear-gradient(#a9c8f0,#6d9fe2);border-color:#5270a0"><svg class="a" style="left:-1px;top:-2.4px" width="9.5" height="9.5" viewBox="0 0 9 9"><path d="M1.8 4.8l2 2.3L8 1.2" fill="none" stroke="#0a0a14" stroke-width="1.5"/></svg></div>
<div class="fld " style="left:1207.0px;top:34.5px;width:348.5px;height:10.4px"><span class="t" style="left:1.2px;top:-0.2px;color:#9a9a9a">—</span></div>
<div class="ck" style="left:1559.0px;top:36.0px"></div>
<span class="t " style="left:1568.7px;top:35.5px;">Static</span>
<i class="ad" style="left:1590.5px;top:38.5px;border-top-color:#333"></i>
<span class="t " style="left:1193.0px;top:47.8px;">Tag</span>
<div class="dd" style="left:1207.0px;top:48.0px;width:185.0px;height:8.6px;"><span class="t m" style="left:3px;top:-1.8px">Untagged</span></div>
<span class="t " style="left:1396.5px;top:47.8px;">Layer</span>
<div class="dd" style="left:1415.8px;top:48.0px;width:180.2px;height:8.6px;"><span class="t m" style="left:3px;top:-1.8px">Ignore Raycast</span></div>
<span class="t " style="left:1177.0px;top:60.1px;">Multiple</span>
<div class="fld" style="left:1207px;top:60.6px;width:389px;height:8.8px;background:#dbdbdb;border-color:#a4a4a4;box-shadow:none;text-align:center"><span class="t m" style="position:static;line-height:5.6px;display:block">Instance Management Disabled</span></div>
<div class="a" style="left:1171px;top:73.2px;width:429px;height:1px;background:#8e8e8e"></div><div class="a" style="left:1171px;top:74.2px;width:429px;height:1px;background:#cfcfcf"></div>
<i class="ad" style="left:1173.5px;top:78px"></i>
<svg class="a" style="left:1180px;top:74.5px" width="11" height="11" viewBox="0 0 11 11"><path d="M1.5 1.5l8 8M9.5 1.5l-8 8M5.5 .5v10M.5 5.5h10" stroke="#d8d8d8" stroke-width=".9"/><rect x="3.4" y="3.4" width="4.2" height="4.2" fill="none" stroke="#e8e8e8" stroke-width=".8"/></svg>
<span class="t b" style="left:1201.0px;top:74.5px;">Rect Transform</span>
<svg class="a" style="left:1578.5px;top:75.0px" width="20" height="9" viewBox="0 0 20 9"><rect x=".5" y=".5" width="7.6" height="7.6" rx="1" fill="#3a6fb5" stroke="#444" stroke-width=".6"/><rect x="2" y="1.6" width="4.6" height="5.4" fill="#dfe9f6"/><path d="M4.3 2.6a1 1 0 0 1 .9 1.6q-.9.5-.9 1.2M4.3 6.2v.5" stroke="#2c4f86" stroke-width=".7" fill="none"/><circle cx="14.4" cy="4.2" r="2.1" fill="none" stroke="#333" stroke-width="1.4"/><path d="M14.4 1v6.4M11.2 4.2h6.4M12.1 1.9l4.6 4.6M16.7 1.9l-4.6 4.6" stroke="#333" stroke-width=".8"/><circle cx="14.4" cy="4.2" r=".9" fill="#c2c2c2"/><path d="M17.6 6.4h2l-1 1.4z" fill="#333"/></svg>
<div class="fld" style="left:1178.7px;top:87px;width:418.6px;height:9.4px;background:#c8c8c8;border-color:#9a9a9a;box-shadow:none;border-radius:1.5px"><span class="t m" style="left:2px;top:-.8px">Some values in some or all objects are driven.</span></div>
<span class="t m" style="left:1191.0px;top:100.3px;font-size:5px">left</span>
<span class="t m" style="left:1171px;top:119px;font-size:5px;transform:rotate(-90deg);width:10px;text-align:center">top</span>
<div class="a" style="left:1180.4px;top:109.5px;width:30.2px;height:29.6px;background:#d2d2d2;border:1px solid #8c8c8c"><div class="a" style="left:3px;top:3px;width:22px;height:22px;border:.7px solid #d26a5c;border-right-color:#aaa;border-bottom-color:#aaa"></div><div class="a" style="left:8.5px;top:9px;width:11px;height:10.5px;border:.8px solid #333"></div><div class="a" style="left:2.5px;top:2.5px;width:1.5px;height:1.5px;background:#b5591f"></div></div>
<span class="t " style="left:1348.0px;top:100.3px;color:#8c8c8c">Pos X</span>
<span class="t " style="left:1431.7px;top:100.3px;color:#8c8c8c">Pos Y</span>
<span class="t " style="left:1516.4px;top:100.3px;">Pos Z</span>
<div class="fld dis" style="left:1347.0px;top:110.1px;width:81.4px;height:9.7px"><span class="t" style="left:1.2px;top:-0.5px;color:#aaa">—</span></div>
<div class="fld dis" style="left:1431.0px;top:110.1px;width:82.0px;height:9.7px"><span class="t" style="left:1.2px;top:-0.5px;color:#aaa">—</span></div>
<div class="fld " style="left:1515.3px;top:110.1px;width:82.0px;height:9.7px"><span class="t" style="left:1.2px;top:-0.5px;color:#9a9a9a">—</span></div>
<span class="t " style="left:1348.0px;top:120.1px;color:#8c8c8c">Width</span>
<span class="t " style="left:1431.7px;top:120.1px;color:#8c8c8c">Height</span>
<div class="fld dis" style="left:1347.0px;top:129.9px;width:81.4px;height:9.5px"><span class="t" style="left:1.2px;top:-0.7px;color:#8c8c8c">0.2</span></div>
<div class="fld dis" style="left:1431.0px;top:129.9px;width:82.0px;height:9.5px"><span class="t" style="left:1.2px;top:-0.7px;color:#8c8c8c">0.2</span></div>
<div class="btn" style="left:1565.2px;top:128.9px;width:32.4px;height:10.7px;border-radius:2.5px;border-color:#858585"><div class="seg" style="left:0;width:16.5px;border-right-color:#8a8a8a"></div><div class="a" style="left:4.8px;top:2px;width:6px;height:5px;border:.8px dotted #444"></div><span class="t" style="left:21.3px;top:-.8px;color:#555">R</span></div>
<i class="ar" style="left:1174px;top:143.3px"></i>
<span class="t " style="left:1180.4px;top:141.3px;">Anchors</span>
<span class="t " style="left:1180.4px;top:152.8px;">Pivot</span>
<span class="t " style="left:1348.2px;top:152.8px;">X</span>
<div class="fld " style="left:1355.3px;top:152.5px;width:73.1px;height:9.6px"><span class="t" style="left:1.2px;top:-0.6px;">0.5</span></div>
<span class="t " style="left:1432.0px;top:152.8px;">Y</span>
<div class="fld " style="left:1438.9px;top:152.5px;width:74.1px;height:9.6px"><span class="t" style="left:1.2px;top:-0.6px;">0.5</span></div>
<span class="t " style="left:1180.4px;top:169.0px;">Rotation</span>
<span class="t " style="left:1348.2px;top:169.0px;">X</span>
<div class="fld " style="left:1355.3px;top:168.9px;width:73.1px;height:9.4px"><span class="t" style="left:1.2px;top:-0.7px;">0</span></div>
<span class="t " style="left:1432.0px;top:169.0px;">Y</span>
<div class="fld " style="left:1438.9px;top:168.9px;width:74.1px;height:9.4px"><span class="t" style="left:1.2px;top:-0.7px;">0</span></div>
<span class="t " style="left:1516.4px;top:169.0px;">Z</span>
<div class="fld " style="left:1523.0px;top:168.9px;width:74.3px;height:9.4px"><span class="t" style="left:1.2px;top:-0.7px;">0</span></div>
<span class="t " style="left:1180.4px;top:180.1px;">Scale</span>
<span class="t " style="left:1348.2px;top:180.1px;">X</span>
<div class="fld " style="left:1355.3px;top:179.9px;width:73.1px;height:9.7px"><span class="t" style="left:1.2px;top:-0.6px;color:#9a9a9a">—</span></div>
<span class="t " style="left:1432.0px;top:180.1px;">Y</span>
<div class="fld " style="left:1438.9px;top:179.9px;width:74.1px;height:9.7px"><span class="t" style="left:1.2px;top:-0.6px;color:#9a9a9a">—</span></div>
<span class="t " style="left:1516.4px;top:180.1px;">Z</span>
<div class="fld " style="left:1523.0px;top:179.9px;width:74.3px;height:9.7px"><span class="t" style="left:1.2px;top:-0.6px;color:#9a9a9a">—</span></div>
<div class="a" style="left:1171px;top:192.0px;width:429px;height:1px;background:#8e8e8e"></div><div class="a" style="left:1171px;top:193.0px;width:429px;height:1px;background:#cfcfcf"></div>
<i class="ad" style="left:1173.5px;top:197px"></i>
<div class="a" style="left:1180.6px;top:194.6px;width:8.6px;height:8.6px;background:#ececec;border:.9px solid #e08a3c;border-radius:1px"><svg class="a" style="left:.5px;top:.5px" width="6" height="6" viewBox="0 0 6 6"><path d="M1 3l1.4 1.8L5 .8" fill="none" stroke="#444" stroke-width=".8"/></svg></div>
<div class="ck" style="left:1192.5px;top:194.8px;background:linear-gradient(#a9c8f0,#6d9fe2);border-color:#5270a0"><svg class="a" style="left:-1px;top:-2.4px" width="9.5" height="9.5" viewBox="0 0 9 9"><path d="M1.8 4.8l2 2.3L8 1.2" fill="none" stroke="#0a0a14" stroke-width="1.5"/></svg></div>
<span class="t b" style="left:1201.5px;top:193.7px;">Toggle (Script)</span>
<svg class="a" style="left:1578.5px;top:194.0px" width="20" height="9" viewBox="0 0 20 9"><rect x=".5" y=".5" width="7.6" height="7.6" rx="1" fill="#3a6fb5" stroke="#444" stroke-width=".6"/><rect x="2" y="1.6" width="4.6" height="5.4" fill="#dfe9f6"/><path d="M4.3 2.6a1 1 0 0 1 .9 1.6q-.9.5-.9 1.2M4.3 6.2v.5" stroke="#2c4f86" stroke-width=".7" fill="none"/><circle cx="14.4" cy="4.2" r="2.1" fill="none" stroke="#333" stroke-width="1.4"/><path d="M14.4 1v6.4M11.2 4.2h6.4M12.1 1.9l4.6 4.6M16.7 1.9l-4.6 4.6" stroke="#333" stroke-width=".8"/><circle cx="14.4" cy="4.2" r=".9" fill="#c2c2c2"/><path d="M17.6 6.4h2l-1 1.4z" fill="#333"/></svg>
<span class="t " style="left:1180.0px;top:205.2px;">Interactable</span>
<div class="ck" style="left:1348.3px;top:205.7px;background:linear-gradient(#a9c8f0,#6d9fe2);border-color:#5270a0"><svg class="a" style="left:-1px;top:-2.4px" width="9.5" height="9.5" viewBox="0 0 9 9"><path d="M1.8 4.8l2 2.3L8 1.2" fill="none" stroke="#0a0a14" stroke-width="1.5"/></svg></div>
<span class="t " style="left:1180.0px;top:216.3px;">Transition</span>
<div class="dd" style="left:1347.8px;top:216.7px;width:249.4px;height:8.4px;"><span class="t m" style="left:3px;top:-1.9px">Color Tint</span></div>
<span class="t " style="left:1189.4px;top:227.7px;">Target Graphic</span>
<div class="fld " style="left:1347.8px;top:227.5px;width:237.8px;height:9.5px"><span class="t" style="left:1.2px;top:-0.7px;color:#9a9a9a">—</span></div>
<div class="a" style="left:1590.9px;top:229.8px;width:4.8px;height:4.8px;border:.8px solid #555;border-radius:50%"></div><div class="a" style="left:1592.7px;top:231.6px;width:1.2px;height:1.2px;background:#555;border-radius:50%"></div>
<span class="t " style="left:1189.4px;top:238.8px;">Normal Color</span>
<div class="a" style="left:1347.8px;top:239.0px;width:237.8px;height:8.6px;background:#ffffff;border:1px solid #8a8a8a;border-top-color:#6f6f6f"><div class="a" style="left:0;bottom:0;width:100%;height:1.6px;background:#fff"></div></div>
<svg class="a" style="left:1588.5px;top:238.3px" width="10" height="10" viewBox="0 0 10 10"><path d="M1 9l.6-2L6 2.6 7.4 4 3 8.4z" fill="#eee" stroke="#444" stroke-width=".6"/><path d="M5.6 2.2l2.2 2.2M6.6 2.4L8 1a.9.9 0 0 1 1.2 1.2L7.8 3.6" stroke="#333" stroke-width="1" fill="none"/></svg>
<span class="t " style="left:1189.4px;top:250.2px;">Highlighted Color</span>
<div class="a" style="left:1347.8px;top:250.4px;width:237.8px;height:8.6px;background:#f5f5f5;border:1px solid #8a8a8a;border-top-color:#6f6f6f"><div class="a" style="left:0;bottom:0;width:100%;height:1.6px;background:#fff"></div></div>
<svg class="a" style="left:1588.5px;top:249.7px" width="10" height="10" viewBox="0 0 10 10"><path d="M1 9l.6-2L6 2.6 7.4 4 3 8.4z" fill="#eee" stroke="#444" stroke-width=".6"/><path d="M5.6 2.2l2.2 2.2M6.6 2.4L8 1a.9.9 0 0 1 1.2 1.2L7.8 3.6" stroke="#333" stroke-width="1" fill="none"/></svg>
<span class="t " style="left:1189.4px;top:261.3px;">Pressed Color</span>
<div class="a" style="left:1347.8px;top:261.5px;width:237.8px;height:8.6px;background:#c8c8c8;border:1px solid #8a8a8a;border-top-color:#6f6f6f"><div class="a" style="left:0;bottom:0;width:100%;height:1.6px;background:#fff"></div></div>
<svg class="a" style="left:1588.5px;top:260.8px" width="10" height="10" viewBox="0 0 10 10"><path d="M1 9l.6-2L6 2.6 7.4 4 3 8.4z" fill="#eee" stroke="#444" stroke-width=".6"/><path d="M5.6 2.2l2.2 2.2M6.6 2.4L8 1a.9.9 0 0 1 1.2 1.2L7.8 3.6" stroke="#333" stroke-width="1" fill="none"/></svg>
<span class="t " style="left:1189.4px;top:272.7px;">Disabled Color</span>
<div class="a" style="left:1347.8px;top:272.9px;width:237.8px;height:8.6px;background:#c8c8c8;border:1px solid #8a8a8a;border-top-color:#6f6f6f"><div class="a" style="left:0;bottom:0;width:100%;height:1.6px;background:#f0f0f0"></div><div class="a" style="left:119px;bottom:0;right:0;height:1.6px;background:#000"></div></div>
<svg class="a" style="left:1588.5px;top:272.2px" width="10" height="10" viewBox="0 0 10 10"><path d="M1 9l.6-2L6 2.6 7.4 4 3 8.4z" fill="#eee" stroke="#444" stroke-width=".6"/><path d="M5.6 2.2l2.2 2.2M6.6 2.4L8 1a.9.9 0 0 1 1.2 1.2L7.8 3.6" stroke="#333" stroke-width="1" fill="none"/></svg>
<span class="t " style="left:1189.4px;top:284.1px;">Color Multiplier</span>
<div class="a" style="left:1349px;top:288px;width:214px;height:1.6px;background:#9c9c9c;border-top:.6px solid #6e6e6e;border-radius:1px"></div><div class="a" style="left:1347.6px;top:285.8px;width:5.6px;height:5.6px;border-radius:50%;background:linear-gradient(#f4f4f4,#cfcfcf);border:.7px solid #6a6a6a"></div>
<div class="fld " style="left:1566.0px;top:283.8px;width:31.2px;height:9.5px"><span class="t" style="left:1.2px;top:-0.7px;">1</span></div>
<span class="t " style="left:1189.4px;top:295.2px;">Fade Duration</span>
<div class="fld " style="left:1347.8px;top:294.9px;width:249.4px;height:9.5px"><span class="t" style="left:1.2px;top:-0.7px;">0.1</span></div>
<span class="t " style="left:1180.0px;top:311.3px;">Navigation</span>
<div class="dd" style="left:1347.8px;top:311.6px;width:249.4px;height:8.4px;"><span class="t m" style="left:3px;top:-1.9px">Automatic</span></div>
<div class="a" style="left:1347.8px;top:324.4px;width:249.4px;height:9px;text-align:center;background:linear-gradient(#f2f2f2,#d4d4d4);border:1px solid #808080;border-radius:2px"><span class="t m" style="position:static;line-height:6px;display:block">Visualize</span></div>
<span class="t " style="left:1180.0px;top:340.2px;">Is On</span>
<div class="ck" style="left:1348.3px;top:340.7px;background:linear-gradient(#a9c8f0,#6d9fe2);border-color:#5270a0"><svg class="a" style="left:-1px;top:-2.4px" width="9.5" height="9.5" viewBox="0 0 9 9"><path d="M1.8 4.8l2 2.3L8 1.2" fill="none" stroke="#0a0a14" stroke-width="1.5"/></svg></div>
<span class="t " style="left:1180.0px;top:351.3px;">Toggle Transition</span>
<div class="dd" style="left:1347.8px;top:351.6px;width:249.4px;height:8.4px;"><span class="t m" style="left:3px;top:-1.9px">Fade</span></div>
<span class="t " style="left:1180.0px;top:362.7px;">Graphic</span>
<div class="fld " style="left:1347.8px;top:362.5px;width:237.8px;height:9.5px"><span class="t" style="left:1.2px;top:-0.7px;">None (Graphic)</span></div>
<div class="a" style="left:1590.9px;top:364.8px;width:4.8px;height:4.8px;border:.8px solid #555;border-radius:50%"></div><div class="a" style="left:1592.7px;top:366.6px;width:1.2px;height:1.2px;background:#555;border-radius:50%"></div>
<span class="t " style="left:1180.0px;top:373.8px;">Group</span>
<div class="fld " style="left:1347.8px;top:373.5px;width:237.8px;height:9.5px"><span class="t" style="left:1.2px;top:-0.7px;">None (Toggle Group)</span></div>
<div class="a" style="left:1590.9px;top:375.9px;width:4.8px;height:4.8px;border:.8px solid #555;border-radius:50%"></div><div class="a" style="left:1592.7px;top:377.7px;width:1.2px;height:1.2px;background:#555;border-radius:50%"></div>
<div class="a" style="left:1180px;top:390.5px;width:417.2px;height:10.5px;background:linear-gradient(#e2e2e2,#d6d6d6);border:1px solid #a6a6a6;border-bottom-color:#8e8e8e;border-radius:2px 2px 0 0"></div>
<span class="t " style="left:1183.8px;top:391.1px;">On Value Changed (Boolean)</span>
<div class="a" style="left:1180px;top:400.5px;width:417.2px;height:30.8px;background:#c6c6c6;border:1px solid #8e8e8e;border-top:none;border-radius:0 0 3px 3px"><div class="a" style="left:0;top:0;width:100%;height:27.5px;background:#ababab"></div></div>
<div class="dd" style="left:1182.8px;top:404.4px;width:122.7px;height:9.0px;"><span class="t m" style="left:3px;top:-1.6px">Runtime Only</span></div>
<div class="dd" style="left:1308.9px;top:404.4px;width:284.4px;height:9.0px;background:linear-gradient(#a4a4a4,#b4b4b4);border-color:#6e6e6e"><span class="t m" style="left:3px;top:-1.6px">MaterialManager.SwitchMaterial</span></div>
<div class="fld" style="left:1182.8px;top:416px;width:122.7px;height:9.6px;overflow:hidden"><div class="a" style="left:2px;top:1.3px;width:4.6px;height:5.6px;background:#f4f4f4;border:.5px solid #8a9ab0"></div><div class="a" style="left:3px;top:3.6px;width:2.6px;height:2px;background:#6fa0d8"></div><span class="t" style="left:9.5px;top:-1.2px">MaterialManager (MaterialManager)</span><div class="a" style="left:111px;top:-1px;width:11px;height:10px;background:linear-gradient(#ececec,#d6d6d6);border-left:1px solid #9a9a9a"></div></div>
<div class="a" style="left:1298.6px;top:418.4px;width:4.8px;height:4.8px;border:.8px solid #555;border-radius:50%"></div><div class="a" style="left:1300.4px;top:420.2px;width:1.2px;height:1.2px;background:#555;border-radius:50%"></div>
<div class="a" style="left:1587px;top:416px;width:9px;height:9px;background:#8a8a8a"></div><div class="a" style="left:1585px;top:428px;width:12px;height:8px;background:#e6e6e6;border-radius:0 0 2px 2px"></div>
<div class="a" style="left:1171px;top:441.6px;width:429px;height:1px;background:#8e8e8e"></div><div class="a" style="left:1171px;top:442.6px;width:429px;height:1px;background:#cfcfcf"></div>
<div class="a" style="left:1171px;top:776.4px;width:429px;height:10.6px;background:linear-gradient(#7b7b7b,#6a6a6a);border-top:1px solid #5a5a5a"></div>
<div class="a" style="left:1239px;top:780px;width:356px;height:3px;border-top:1px solid #9a9a9a;border-bottom:1px solid #9a9a9a"></div>
<span class="t b" style="left:1173.2px;top:776.1px;color:#ececec;font-size:5.95px">Intercepted Events</span>
<div class="a" style="left:1171px;top:787px;width:429px;height:99px;background:#303030"></div>
<div class="a" style="left:1186.0px;top:814px;width:38px;height:37.4px;overflow:hidden;color:#c4c4c4;font-size:6.6px"><span class="t b" style="left:0;top:1px;color:#d6d6d6">Toggle</span><span class="t" style="left:0;top:11px">OnDeselec</span><span class="t" style="left:0;top:21px">OnMove</span><span class="t" style="left:0;top:30.5px">OnPointerI</span></div>
<span class="t b" style="left:1187.5px;top:850.7px;color:#f2f2f2;font-size:5px">Material 7</span>
<div class="a" style="left:1231.8px;top:814px;width:38px;height:37.4px;overflow:hidden;color:#c4c4c4;font-size:6.6px"><span class="t b" style="left:0;top:1px;color:#d6d6d6">Toggle</span><span class="t" style="left:0;top:11px">OnDeselec</span><span class="t" style="left:0;top:21px">OnMove</span><span class="t" style="left:0;top:30.5px">OnPointerI</span></div>
<span class="t b" style="left:1233.3px;top:850.7px;color:#f2f2f2;font-size:5px">Material 6</span>
<div class="a" style="left:1277.7px;top:814px;width:38px;height:37.4px;overflow:hidden;color:#c4c4c4;font-size:6.6px"><span class="t b" style="left:0;top:1px;color:#d6d6d6">Toggle</span><span class="t" style="left:0;top:11px">OnDeselec</span><span class="t" style="left:0;top:21px">OnMove</span><span class="t" style="left:0;top:30.5px">OnPointerI</span></div>
<span class="t b" style="left:1279.2px;top:850.7px;color:#f2f2f2;font-size:5px">Material 4</span>
<div class="a" style="left:1323.5px;top:814px;width:38px;height:37.4px;overflow:hidden;color:#c4c4c4;font-size:6.6px"><span class="t b" style="left:0;top:1px;color:#d6d6d6">Toggle</span><span class="t" style="left:0;top:11px">OnDeselec</span><span class="t" style="left:0;top:21px">OnMove</span><span class="t" style="left:0;top:30.5px">OnPointerI</span></div>
<span class="t b" style="left:1325.0px;top:850.7px;color:#f2f2f2;font-size:5px">Material 3</span>
<div class="a" style="left:1369.4px;top:814px;width:38px;height:37.4px;overflow:hidden;color:#c4c4c4;font-size:6.6px"><span class="t b" style="left:0;top:1px;color:#d6d6d6">Toggle</span><span class="t" style="left:0;top:11px">OnDeselec</span><span class="t" style="left:0;top:21px">OnMove</span><span class="t" style="left:0;top:30.5px">OnPointerI</span></div>
<span class="t b" style="left:1370.9px;top:850.7px;color:#f2f2f2;font-size:5px">Material 2</span>
<div class="a" style="left:1415.2px;top:814px;width:38px;height:37.4px;overflow:hidden;color:#c4c4c4;font-size:6.6px"><span class="t b" style="left:0;top:1px;color:#d6d6d6">Toggle</span><span class="t" style="left:0;top:11px">OnDeselec</span><span class="t" style="left:0;top:21px">OnMove</span><span class="t" style="left:0;top:30.5px">OnPointerI</span></div>
<span class="t b" style="left:1416.8px;top:850.7px;color:#f2f2f2;font-size:5px">Material 8</span>
<div class="a" style="left:1461.1px;top:814px;width:38px;height:37.4px;overflow:hidden;color:#c4c4c4;font-size:6.6px"><span class="t b" style="left:0;top:1px;color:#d6d6d6">Toggle</span><span class="t" style="left:0;top:11px">OnDeselec</span><span class="t" style="left:0;top:21px">OnMove</span><span class="t" style="left:0;top:30.5px">OnPointerI</span></div>
<span class="t b" style="left:1462.6px;top:850.7px;color:#f2f2f2;font-size:5px">Material 5</span>
<div class="a" style="left:1507.0px;top:814px;width:38px;height:37.4px;overflow:hidden;color:#c4c4c4;font-size:6.6px"><span class="t b" style="left:0;top:1px;color:#d6d6d6">Toggle</span><span class="t" style="left:0;top:11px">OnDeselec</span><span class="t" style="left:0;top:21px">OnMove</span><span class="t" style="left:0;top:30.5px">OnPointerI</span></div>
<span class="t b" style="left:1508.5px;top:850.7px;color:#f2f2f2;font-size:5px">Material 1</span>
<div class="a" style="left:1552.8px;top:814px;width:38px;height:37.4px;overflow:hidden;color:#c4c4c4;font-size:6.6px"><span class="t b" style="left:0;top:1px;color:#d6d6d6">Toggle</span><span class="t" style="left:0;top:11px">OnDeselec</span><span class="t" style="left:0;top:21px">OnMove</span><span class="t" style="left:0;top:30.5px">OnPointerI</span></div>
<span class="t b" style="left:1554.3px;top:850.7px;color:#f2f2f2;font-size:5px">Material 0</span>
<span class="t b" style="left:1171px;width:429px;text-align:center;top:873px;color:#f4f4f4;font-size:6.15px">Previewing 9 of 9 Objects</span>


<!-- ============ POPUP MENUS ============ -->
<div class="menu" style="left:1308.7px;top:413.6px;width:282px;height:53.6px;border-radius:0 0 3px 3px">
<div class="a" style="left:0;top:16.4px;width:100%;height:1px;background:#d2d2d2"></div>
<div class="hl" style="left:0;top:41.4px;width:100%;height:9px"></div>
<span class="t" style="left:13.2px;top:3.8px;">No Function</span>
<span class="t" style="left:13.2px;top:21.2px;">GameObject</span>
<span class="t" style="left:13.2px;top:31.2px;">Transform</span>
<span class="t" style="left:13.2px;top:41.4px;color:#fff">MaterialManager</span>
<i class="ar" style="left:267.5px;top:22.5px;border-left:6.2px solid #222;border-top-width:3.1px;border-bottom-width:3.1px"></i>
<i class="ar" style="left:267.5px;top:32.5px;border-left:6.2px solid #222;border-top-width:3.1px;border-bottom-width:3.1px"></i>
<i class="ar" style="left:267.5px;top:42.7px;border-left:6.2px solid #fff;border-top-width:3.1px;border-bottom-width:3.1px"></i>
</div>
<div class="menu" style="left:1183px;top:452px;width:125.7px;height:194.4px">
<span class="t" style="left:13.4px;top:2.9px;color:#a9a9a9">Dynamic bool</span>
<span class="t" style="left:13.4px;top:12.9px;">enabled</span>
<span class="t" style="left:13.4px;top:22.9px;">runInEditMode</span>
<span class="t" style="left:13.4px;top:32.9px;">useGUILayout</span>
<span class="t" style="left:13.4px;top:52.9px;color:#a9a9a9">Static Parameters</span>
<span class="t" style="left:13.4px;top:62.9px;">bool enabled</span>
<span class="t" style="left:13.4px;top:72.9px;">string name</span>
<span class="t" style="left:13.4px;top:82.9px;">bool runInEditMode</span>
<span class="t" style="left:13.4px;top:92.9px;">string tag</span>
<span class="t" style="left:13.4px;top:102.9px;">bool useGUILayout</span>
<span class="t" style="left:13.4px;top:112.9px;">BroadcastMessage (string)</span>
<span class="t" style="left:13.4px;top:122.9px;">CancelInvoke (string)</span>
<span class="t" style="left:13.4px;top:132.9px;">CancelInvoke ()</span>
<span class="t" style="left:13.4px;top:142.9px;">SendMessage (string)</span>
<span class="t" style="left:13.4px;top:152.9px;">SendMessageUpwards (string)</span>
<span class="t" style="left:13.4px;top:162.9px;">StopAllCoroutines ()</span>
<span class="t" style="left:13.4px;top:172.9px;">StopCoroutine (string)</span>
<div class="hl" style="left:0;top:182.9px;width:100%;height:9px"></div>
<svg class="a" style="left:3.5px;top:184.3px" width="6" height="6" viewBox="0 0 6 6"><path d="M.8 3.2l1.6 1.8L5.2 .8" fill="none" stroke="#fff" stroke-width="1"/></svg>
<span class="t" style="left:13.4px;top:182.9px;color:#fff">SwitchMaterial (int)</span>
</div>

</body>
</html>
